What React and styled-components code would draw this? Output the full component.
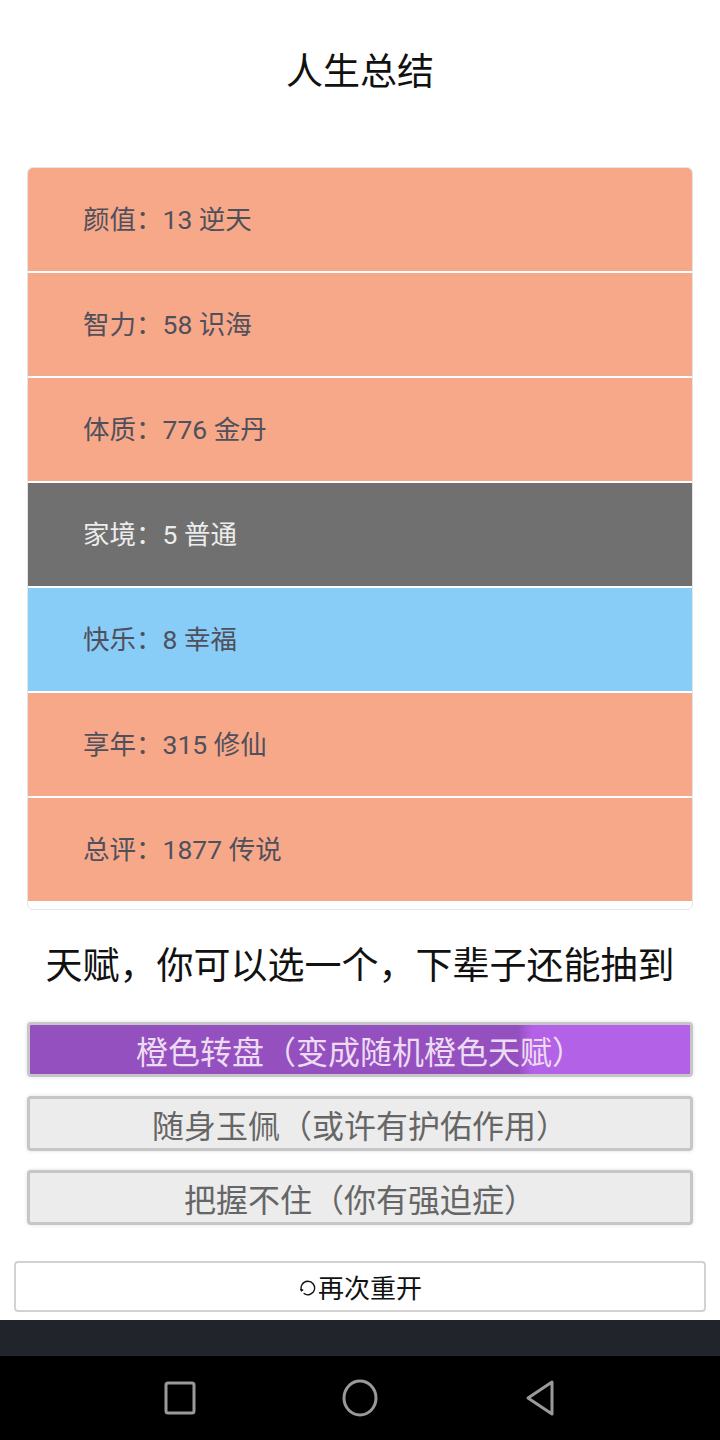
import React from 'react';
import styled, { createGlobalStyle } from 'styled-components';

const GlobalStyle = createGlobalStyle`
    body {
        margin: 0;
        background: #fff;
        font-family: Roboto, "Noto Sans CJK SC", sans-serif;
    }
`

const Screen = styled.div`
    width: 720px;
    height: 1440px;
    display: flex;
    flex-direction: column;
`

const Content = styled.div`
    height: 1320px;
    display: flex;
    flex-direction: column;
`

const Title = styled.h1`
    margin: 49px 0 0;
    font-size: 37px;
    line-height: 48px;
    font-weight: 400;
    color: #111;
    text-align: center;
`

const PropertyList = styled.ul`
    list-style: none;
    margin: 70px 27px 0;
    padding: 0 0 8px;
    border: 1px solid #e6e6e6;
    border-radius: 6px;
    overflow: hidden;
    display: flex;
    flex-direction: column;
    gap: 2px;
    background: #fff;
`

const PropertyRow = styled.li`
    height: 103px;
    display: flex;
    align-items: center;
    padding-left: 55px;
    padding-bottom: 4px;
    box-sizing: border-box;
    font-size: 26.5px;
    background: ${p => p.bg};
    color: ${p => p.fg || '#50505c'};
`

const Subtitle = styled.h2`
    margin: 33px 0 0;
    font-size: 37px;
    line-height: 48px;
    font-weight: 400;
    color: #111;
    text-align: center;
`

const TalentList = styled.div`
    display: flex;
    flex-direction: column;
    gap: 19px;
    margin: 31px 27px 0;
`

const TalentButton = styled.button`
    height: 55px;
    box-sizing: border-box;
    border: 3px solid #c6c6c9;
    border-radius: 4px;
    box-shadow: 0 0 4px rgba(0,0,0,.12);
    font-family: inherit;
    font-size: 32px;
    padding: 0;
    background: ${p => p.selected
        ? 'linear-gradient(90deg, #9550c0 0%, #9550c0 74%, #b361e6 76%, #b361e6 100%)'
        : '#ececec'};
    color: ${p => p.selected ? '#ecdcf2' : '#666'};
`

const RestartButton = styled.button`
    margin: 36px 14px 0;
    height: 51px;
    border: 2px solid #d2d2d2;
    border-radius: 4px;
    background: #fff;
    font-family: inherit;
    font-size: 26px;
    color: #111;
    display: flex;
    align-items: center;
    justify-content: center;
    gap: 2px;
`

const StatusBar = styled.div`
    height: 36px;
    background: #21252b;
`

const NavBar = styled.div`
    height: 84px;
    background: #000;
    display: flex;
    align-items: center;
    justify-content: center;
    gap: 144px;
`

const rows = [
    { label: '颜值：13 逆天', bg: '#f7a889' },
    { label: '智力：58 识海', bg: '#f7a889' },
    { label: '体质：776 金丹', bg: '#f7a889' },
    { label: '家境：5 普通', bg: '#707070', fg: '#ececec' },
    { label: '快乐：8 幸福', bg: '#88cdf8' },
    { label: '享年：315 修仙', bg: '#f7a889' },
    { label: '总评：1877 传说', bg: '#f7a889' },
];

const talents = [
    { name: '橙色转盘（变成随机橙色天赋）', selected: true },
    { name: '随身玉佩（或许有护佑作用）' },
    { name: '把握不住（你有强迫症）' },
];

const RefreshIcon = () => (
    <svg width="18" height="18" viewBox="0 0 16 16" fill="none" stroke="#111" strokeWidth="1.2">
        <path d="M3.2 11.2 A6 6 0 1 1 5 13.6" />
        <path d="M2.2 9.8 L3.2 11.4 L4.6 10.2" />
    </svg>
);

const App = () => (
    <Screen>
        <GlobalStyle />
        <Content>
            <Title>人生总结</Title>
            <PropertyList>
                {rows.map(r => (
                    <PropertyRow key={r.label} bg={r.bg} fg={r.fg}>{r.label}</PropertyRow>
                ))}
            </PropertyList>
            <Subtitle>天赋，你可以选一个，下辈子还能抽到</Subtitle>
            <TalentList>
                {talents.map(t => (
                    <TalentButton key={t.name} selected={t.selected}>{t.name}</TalentButton>
                ))}
            </TalentList>
            <RestartButton><RefreshIcon />再次重开</RestartButton>
        </Content>
        <StatusBar />
        <NavBar>
            <svg width="34" height="34" viewBox="0 0 34 34">
                <rect x="3" y="2" width="28" height="30" rx="2" fill="none" stroke="#9a9a9a" strokeWidth="3" />
            </svg>
            <svg width="38" height="38" viewBox="0 0 38 38">
                <ellipse cx="19" cy="19" rx="16" ry="17" fill="none" stroke="#9a9a9a" strokeWidth="3" />
            </svg>
            <svg width="34" height="38" viewBox="0 0 34 38">
                <path d="M29 3 L29 35 L5 19 Z" fill="none" stroke="#9a9a9a" strokeWidth="3" strokeLinejoin="round" />
            </svg>
        </NavBar>
    </Screen>
);

export default App;
